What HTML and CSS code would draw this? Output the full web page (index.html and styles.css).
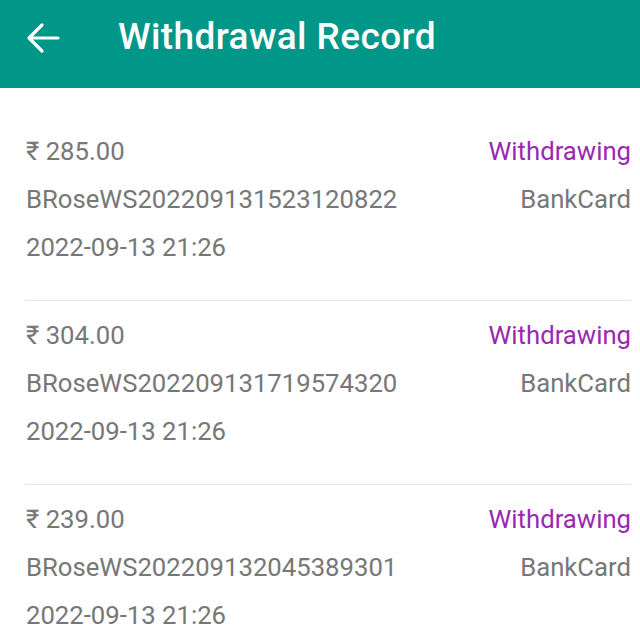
FILE: index.html
```html
<!DOCTYPE html>
<html>
<head>
<meta charset="utf-8">
<link rel="stylesheet" href="styles.css">
</head>
<body>
<header class="bar">
  <svg class="back" width="34" height="32" viewBox="0 0 34 32"><path d="M32 16H3M16 3L3 16L16 29" fill="none" stroke="#fff" stroke-width="3.2" stroke-linecap="round" stroke-linejoin="round"/></svg>
  <h1 class="title">Withdrawal Record</h1>
</header>
<main class="list">
  <div class="item">
    <div class="row"><span class="amount">₹ 285.00</span><span class="status">Withdrawing</span></div>
    <div class="row"><span>BRoseWS202209131523120822</span><span>BankCard</span></div>
    <div class="row"><span>2022-09-13 21:26</span></div>
  </div>
  <div class="item">
    <div class="row"><span class="amount">₹ 304.00</span><span class="status">Withdrawing</span></div>
    <div class="row"><span>BRoseWS202209131719574320</span><span>BankCard</span></div>
    <div class="row"><span>2022-09-13 21:26</span></div>
  </div>
  <div class="item">
    <div class="row"><span class="amount">₹ 239.00</span><span class="status">Withdrawing</span></div>
    <div class="row"><span>BRoseWS202209132045389301</span><span>BankCard</span></div>
    <div class="row"><span>2022-09-13 21:26</span></div>
  </div>
</main>
</body>
</html>
```
FILE: styles.css
```css
html, body { margin: 0; padding: 0; background: #fff; }
body { font-family: Roboto, "Noto Sans", sans-serif; overflow: hidden; }
.bar {
  height: 88px;
  background: #009688;
  display: flex;
  align-items: flex-start;
  box-sizing: border-box;
  padding: 0 0 0 26px;
}
.back { margin-top: 22px; flex: none; }
.title {
  margin: 0 0 0 58px;
  color: #fff;
  font-weight: 500;
  font-size: 37px;
  line-height: 74px;
  letter-spacing: 0.4px;
}
.list { padding: 29px 9px 0 25px; }
.item {
  padding: 10px 0 29px 1px;
  border-bottom: 1.5px solid #e6e6e6;
}
.row {
  display: flex;
  justify-content: space-between;
  font-size: 25.7px;
  line-height: 48px;
  color: #777;
}
.status { color: #9c27b0; }
```
